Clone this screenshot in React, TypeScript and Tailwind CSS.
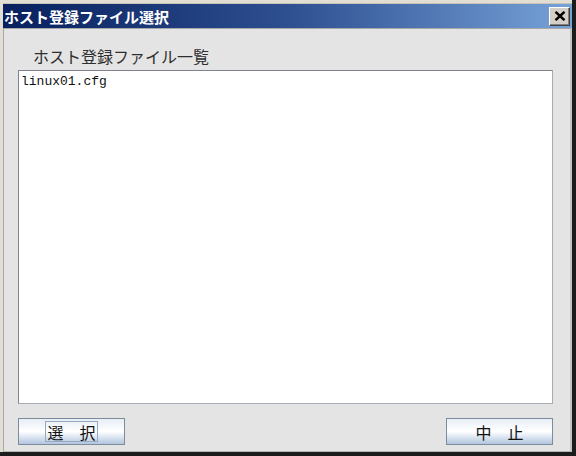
import React from 'react'

const jp = "font-['Noto_Sans_CJK_JP','Noto_Sans',sans-serif]"

function CloseButton() {
  return (
    <button
      type="button"
      aria-label="閉じる"
      className="flex h-[19px] w-[21px] items-center justify-center border border-t-white border-l-white border-r-[#404040] border-b-[#404040] bg-[#d4d0c8] shadow-[inset_-1px_-1px_0_#808080]"
    >
      <svg width="12" height="10" viewBox="0 0 12 10" fill="none" stroke="#000" strokeWidth="2.4">
        <path d="M1.5 0.8l9 8.4M10.5 0.8l-9 8.4" />
      </svg>
    </button>
  )
}

function DialogButton({ label, focused }: { label: string; focused?: boolean }) {
  return (
    <button
      type="button"
      className={`flex h-[27px] w-[107px] items-center justify-center border border-[#7d8c9c] bg-gradient-to-b from-[#e8eef6] via-white to-[#b2c6df] text-[16px] leading-none text-[#111] ${jp}`}
    >
      <span className={`flex h-[21px] items-center px-[1px] ${focused ? 'border border-[#97a9c0]' : 'border border-transparent'}`}>
        {label}
      </span>
    </button>
  )
}

export default function App() {
  return (
    <div className="h-[456px] w-[576px] overflow-hidden bg-[#1c1c1c]">
      <div className="flex h-[452px] w-[572px] flex-col border-t-[3px] border-l-[3px] border-[#e2ded4] bg-[#e4e4e4]">
        <div className="flex h-[25px] items-center justify-between border-t border-[#c8c4b8] bg-gradient-to-r from-[#08205e] via-[#2e4f90] to-[#77a2d8] pr-[2px] pl-[1px]">
          <span className={`text-[15px] font-bold leading-none text-white ${jp}`}>ホスト登録ファイル選択</span>
          <CloseButton />
        </div>
        <div className="flex flex-1 flex-col border-t border-l border-[#a8a8a8] border-r-[2px] border-r-[#c4c4c4] border-b border-b-[#b4b4b4] pt-[17px] pr-[17px] pl-[14px]">
          <div className={`h-[24px] pl-[15px] text-[16px] leading-[21px] text-[#2e2e2e] ${jp}`}>ホスト登録ファイル一覧</div>
          <div className="h-[334px] w-[535px] border border-t-[#7f848c] border-l-[#7f848c] border-r-[#a7adb5] border-b-[#a7adb5] bg-white pt-[3px] pl-[2px]">
            <div className="font-['Liberation_Mono',monospace] text-[13px] leading-[16px] text-[#111]">linux01.cfg</div>
          </div>
          <div className="mt-[14px] flex w-[535px] justify-between">
            <DialogButton label="選　択" focused />
            <DialogButton label="中　止" />
          </div>
        </div>
      </div>
    </div>
  )
}
